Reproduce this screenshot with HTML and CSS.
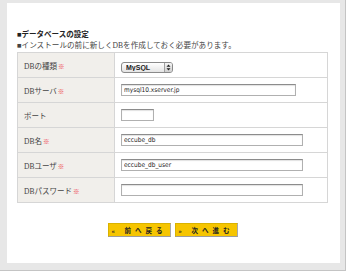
FILE: index.html
```html
<!DOCTYPE html>
<html lang="ja">
<head>
    <meta charset="UTF-8">
    <title>データベースの設定</title>
    <link rel="stylesheet" href="styles.css">
</head>
<body>
    <div class="window">
        <div class="panel">
            <div class="intro">
                <p class="intro-title">■データベースの設定</p>
                <p class="intro-note">■インストールの前に新しくDBを作成しておく必要があります。</p>
            </div>

            <table class="form-table">
                <tr>
                    <th>DBの種類<span class="req">※</span></th>
                    <td>
                        <span class="select-wrap">
                            <select class="db-select">
                                <option>MySQL</option>
                                <option>PostgreSQL</option>
                            </select>
                            <span class="select-arrows">
                                <svg width="5" height="7" viewBox="0 0 5 7">
                                    <path d="M2.5 0.5 L4.5 2.8 L0.5 2.8 Z M2.5 6.5 L4.5 4.2 L0.5 4.2 Z" fill="#222"/>
                                </svg>
                            </span>
                        </span>
                    </td>
                </tr>
                <tr>
                    <th>DBサーバ<span class="req">※</span></th>
                    <td><input type="text" class="field field-server" value="mysql10.xserver.jp"></td>
                </tr>
                <tr>
                    <th>ポート</th>
                    <td><input type="text" class="field field-port" value=""></td>
                </tr>
                <tr>
                    <th>DB名<span class="req">※</span></th>
                    <td><input type="text" class="field field-wide" value="eccube_db"></td>
                </tr>
                <tr>
                    <th>DBユーザ<span class="req">※</span></th>
                    <td><input type="text" class="field field-wide" value="eccube_db_user"></td>
                </tr>
                <tr>
                    <th>DBパスワード<span class="req">※</span></th>
                    <td><input type="password" class="field field-wide" value=""></td>
                </tr>
            </table>

            <div class="btn-area">
                <button class="step-btn">« 前へ戻る</button>
                <button class="step-btn">» 次へ進む</button>
            </div>
        </div>
    </div>
</body>
</html>
```

FILE: styles.css
```css
* {
    margin: 0;
    padding: 0;
    box-sizing: border-box;
}

body {
    background: #ffffff;
    font-family: "Liberation Serif", "Noto Sans CJK JP", serif;
    color: #333;
}

.window {
    width: 346px;
    height: 271px;
    padding: 3px 0 0 7px;
    background: #e7e7e7;
    border-right: 1px solid #c4c4c4;
    border-bottom: 1px solid #c4c4c4;
}

.panel {
    width: 333px;
    height: 260px;
    background: #ffffff;
    padding: 26px 12px 0 10px;
}

.intro {
    margin-bottom: 1px;
}

.intro-title {
    font-size: 7.5px;
    line-height: 11px;
    font-weight: bold;
    color: #222;
}

.intro-note {
    font-size: 7.6px;
    line-height: 11px;
    color: #444;
}

.form-table {
    width: 311px;
    border-collapse: collapse;
    border: 1px solid #cfcfcf;
}

.form-table th,
.form-table td {
    height: 25px;
    padding: 0 6px;
    border: 1px solid #d6d6d6;
    vertical-align: middle;
}

.form-table th {
    width: 97px;
    background: #f1efeb;
    text-align: left;
    font-weight: normal;
    font-size: 7.5px;
    color: #444;
}

.form-table td {
    background: #ffffff;
}

.req {
    color: #ee3b47;
    font-size: 6.5px;
    font-weight: bold;
    margin-left: 1px;
}

.select-wrap {
    position: relative;
    display: inline-block;
    margin-top: 3px;
}

.db-select {
    appearance: none;
    -webkit-appearance: none;
    width: 52px;
    height: 11px;
    padding: 0 0 0 4px;
    border: 1px solid #8a8a8a;
    border-radius: 3px;
    background: linear-gradient(#ffffff, #e4e4e4);
    font-family: "Liberation Sans", sans-serif;
    font-size: 7px;
    font-weight: bold;
    color: #222;
    display: block;
}

.select-arrows {
    position: absolute;
    top: 1px;
    right: 1px;
    width: 8px;
    height: 9px;
    border-left: 1px solid #a0a0a0;
    border-radius: 0 2px 2px 0;
    background: linear-gradient(#f4f4f4, #cfcfcf);
    display: flex;
    align-items: center;
    justify-content: center;
}

.field {
    display: block;
    height: 12px;
    padding: 0 2px 1px;
    border: 1px solid #b0b0b0;
    border-top-color: #8c8c8c;
    box-shadow: inset 0 1px 1px rgba(0, 0, 0, 0.12);
    font-family: "DejaVu Sans Condensed", "Liberation Sans", sans-serif;
    font-size: 6.5px;
    line-height: 9px;
    color: #222;
    background: #fff;
    outline: none;
}

.field-server {
    width: 175px;
}

.field-port {
    width: 33px;
}

.field-wide {
    width: 182px;
}

.btn-area {
    margin-top: 20px;
    display: flex;
    justify-content: center;
    gap: 4px;
}

.step-btn {
    width: 63px;
    height: 14px;
    background: #f6c500;
    border: 1px solid #d9b200;
    border-bottom-color: #9c9c9c;
    border-right-color: #a8a8a8;
    font-family: "Liberation Serif", "Noto Sans CJK JP", serif;
    font-size: 6.5px;
    font-weight: bold;
    letter-spacing: 4px;
    color: #222;
    text-align: center;
    cursor: pointer;
}
```
